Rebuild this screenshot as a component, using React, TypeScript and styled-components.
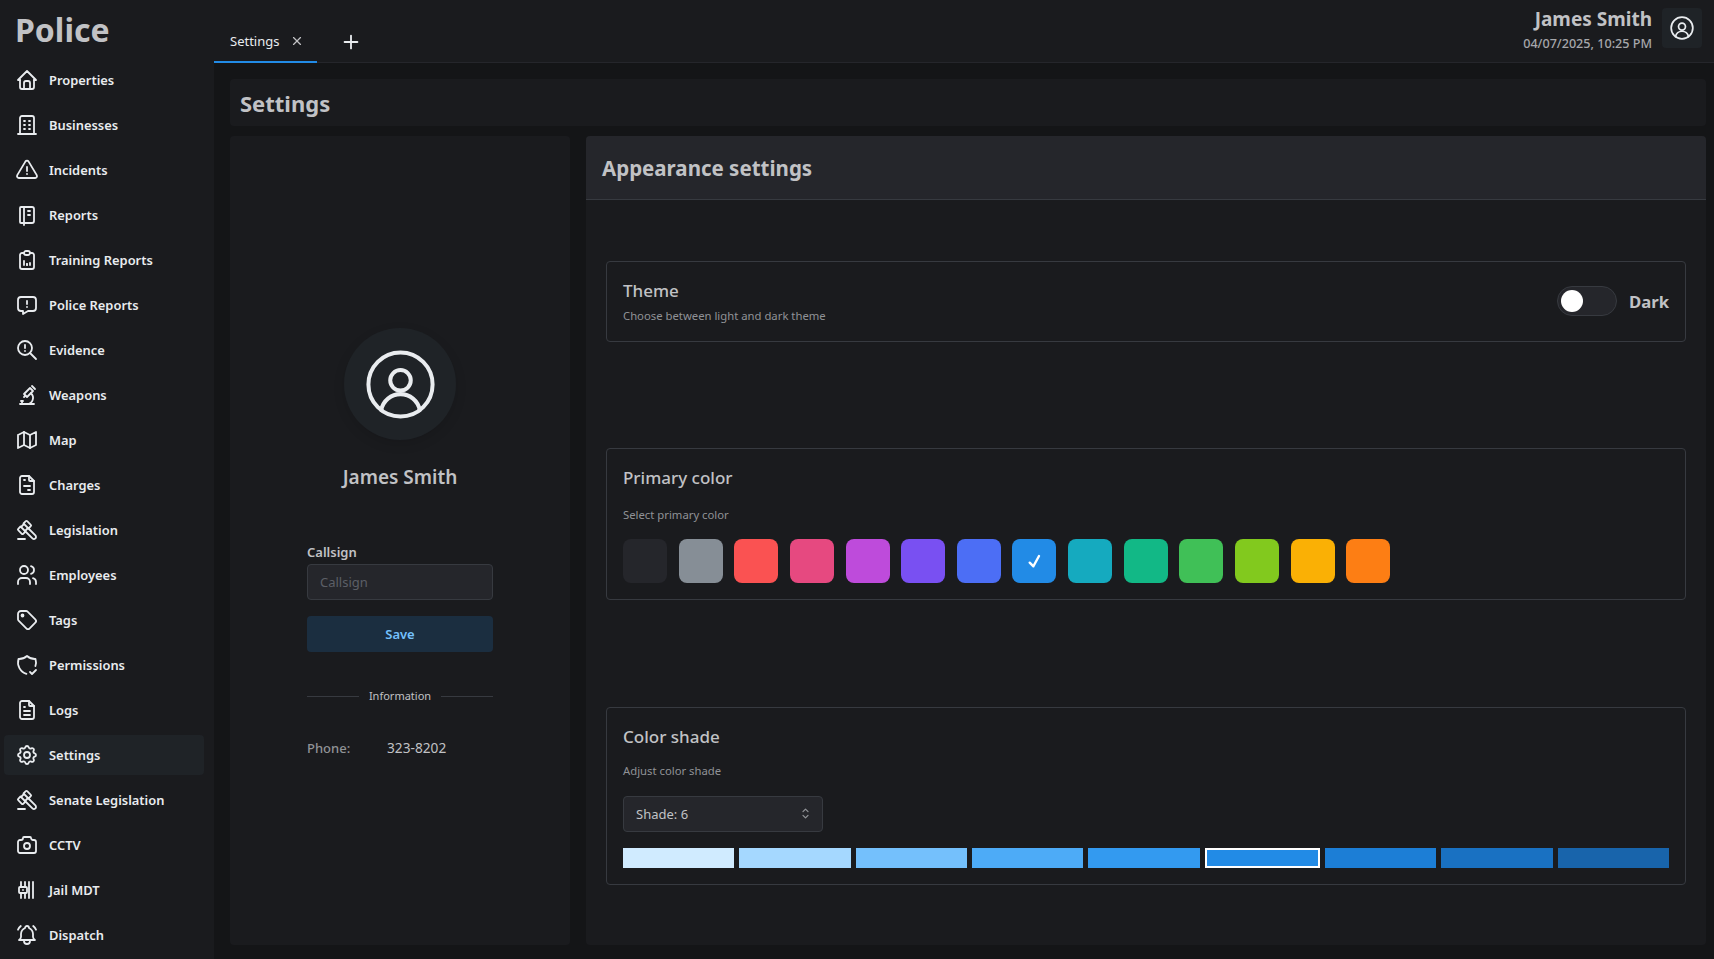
import React from "react";
import styled, { createGlobalStyle } from "styled-components";
import {
  TbHome, TbBuilding, TbAlertTriangle, TbNotebook, TbClipboardData, TbMessageReport,
  TbZoomExclamation, TbMicroscope, TbMap, TbFileInvoice, TbGavel, TbUsers, TbTag,
  TbShieldCheck, TbFileText, TbSettings, TbCamera, TbBellRinging,
  TbPlus, TbX, TbSelector,
} from "react-icons/tb";

const FONT = `"Noto Sans", "Open Sans", "Liberation Sans", sans-serif`;

const Global = createGlobalStyle`
  html, body { margin: 0; padding: 0; height: 100%; background: #141517; }
  * { box-sizing: border-box; }
  body { font-family: ${FONT}; color: #c1c2c5; overflow: hidden; }
`;

const Shell = styled.div`
  display: flex;
  width: 1714px;
  height: 959px;
  overflow: hidden;
`;

const Sidebar = styled.nav`
  width: 214px;
  flex: none;
  background: #1a1b1e;
  display: flex;
  flex-direction: column;
`;

const Logo = styled.h1`
  margin: 0;
  height: 60px;
  padding: 8px 0 0 15px;
  font-size: 32px;
  line-height: 44px;
  font-weight: 700;
  color: #c1c2c5;
`;

const NavList = styled.div`
  display: flex;
  flex-direction: column;
  gap: 5px;
  padding-left: 4px;
`;

const NavRow = styled.div<{ $active?: boolean }>`
  width: 200px;
  height: 40px;
  flex: none;
  display: flex;
  align-items: center;
  gap: 10px;
  padding-left: 11px;
  border-radius: 4px;
  background: ${(p) => (p.$active ? "#1f2327" : "transparent")};
  color: #e9ecef;
  font-size: 12.9px;
  font-weight: 600;
  svg { width: 24px; height: 24px; flex: none; stroke-width: 1.8; }
`;

const Main = styled.div`
  flex: 1;
  min-width: 0;
  display: flex;
  flex-direction: column;
`;

const TopBar = styled.header`
  height: 63px;
  flex: none;
  background: #1a1b1e;
  border-bottom: 1px solid #25262b;
  display: flex;
  align-items: flex-start;
  justify-content: space-between;
  padding-right: 12px;
`;

const TabStrip = styled.div`
  display: flex;
  align-items: center;
  height: 63px;
`;

const Tab = styled.div`
  width: 103px;
  height: 63px;
  border-bottom: 2px solid #228be6;
  display: flex;
  align-items: center;
  padding: 20px 0 0 16px;
  gap: 11px;
  font-size: 13px;
  color: #e9ecef;
  svg { width: 14px; height: 14px; color: #c1c2c5; }
`;

const AddTab = styled.div`
  margin: 20px 0 0 23px;
  display: flex;
  color: #e9ecef;
  svg { width: 22px; height: 22px; }
`;

const UserArea = styled.div`
  display: flex;
  align-items: flex-start;
  gap: 10px;
  padding-top: 8px;
`;

const UserText = styled.div`
  text-align: right;
`;

const UserName = styled.div`
  font-size: 19px;
  line-height: 22px;
  font-weight: 700;
  color: #c1c2c5;
`;

const UserDate = styled.div`
  margin-top: 4px;
  font-size: 12.6px;
  line-height: 20px;
  color: #a6a7ab;
  font-weight: 500;
`;

const UserBtn = styled.div`
  width: 40px;
  height: 40px;
  border-radius: 4px;
  background: #1f2327;
  color: #e9ecef;
  display: flex;
  align-items: center;
  justify-content: center;
  svg { width: 26px; height: 26px; }
`;

const Content = styled.main`
  flex: 1;
  min-height: 0;
  padding: 16px 8px 14px 16px;
  display: flex;
  flex-direction: column;
  gap: 10px;
`;

const TitleBar = styled.div`
  height: 47px;
  flex: none;
  background: #1a1b1e;
  border-radius: 4px;
  padding-left: 10px;
  display: flex;
  align-items: center;
  font-size: 22px;
  font-weight: 700;
  color: #c1c2c5;
`;

const Columns = styled.div`
  flex: 1;
  min-height: 0;
  display: flex;
  gap: 16px;
`;

const ProfileCard = styled.section`
  width: 340px;
  flex: none;
  background: #1a1b1e;
  border-radius: 4px;
  padding: 192px 77px 0;
  display: flex;
  flex-direction: column;
  align-items: center;
`;

const Avatar = styled.div`
  width: 112px;
  height: 112px;
  border-radius: 50%;
  background: #1f2327;
  box-shadow: 0 4px 12px rgba(0, 0, 0, 0.12);
  color: #e9ecef;
  display: flex;
  align-items: center;
  justify-content: center;
  svg { width: 77px; height: 77px; }
`;

const ProfileName = styled.div`
  margin-top: 23px;
  font-size: 19px;
  line-height: 28px;
  font-weight: 600;
  color: #c1c2c5;
`;

const FieldLabel = styled.label`
  align-self: stretch;
  margin-top: 51px;
  font-size: 13px;
  line-height: 20px;
  font-weight: 600;
  color: #c1c2c5;
`;

const TextInput = styled.input`
  display: block;
  width: 100%;
  height: 36px;
  margin-top: 2px;
  padding: 0 12px;
  background: #25262b;
  border: 1px solid #373a40;
  border-radius: 4px;
  font: 400 13px ${FONT};
  color: #c1c2c5;
  &::placeholder { color: #5c5f66; opacity: 1; }
`;

const SaveButton = styled.button`
  width: 100%;
  height: 36px;
  margin-top: 16px;
  background: #1b2e40;
  border: 0;
  border-radius: 4px;
  font: 600 13px ${FONT};
  color: #74c0fc;
`;

const DividerRow = styled.div`
  align-self: stretch;
  margin-top: 34px;
  display: flex;
  align-items: center;
  gap: 10px;
  font-size: 11px;
  line-height: 20px;
  color: #c1c2c5;
  &::before, &::after { content: ""; flex: 1; height: 1px; background: #373a40; }
`;

const InfoRow = styled.div`
  align-self: stretch;
  margin-top: 32px;
  display: flex;
  font-size: 13px;
  line-height: 20px;
`;

const InfoKey = styled.span`
  width: 80px;
  font-weight: 500;
  color: #909296;
`;

const InfoValue = styled.span`
  font-size: 13.7px;
  color: #c1c2c5;
`;

const SettingsCard = styled.section`
  flex: 1;
  min-width: 0;
  background: #1a1b1e;
  border-radius: 4px;
  overflow: hidden;
`;

const SettingsHeader = styled.div`
  height: 64px;
  background: #25262b;
  border-bottom: 1px solid #373a40;
  padding-left: 16px;
  display: flex;
  align-items: center;
  font-size: 20.5px;
  font-weight: 700;
  color: #c1c2c5;
`;

const SettingsBody = styled.div`
  padding: 61px 20px 0;
  display: flex;
  flex-direction: column;
  gap: 106.5px;
`;

const Group = styled.div`
  border: 1px solid #373a40;
  border-radius: 4px;
  padding: 16px;
`;

const ThemeGroup = styled(Group)`
  height: 80.5px;
  padding-top: 0;
  padding-bottom: 0;
  display: flex;
  align-items: center;
  justify-content: space-between;
`;

const GroupTitle = styled.div`
  font-size: 17px;
  line-height: 26px;
  font-weight: 500;
  color: #c1c2c5;
`;

const GroupHint = styled.div<{ $gap: number }>`
  margin-top: ${(p) => p.$gap}px;
  font-size: 11.3px;
  line-height: 18px;
  color: #909296;
`;

const ThemeControl = styled.div`
  display: flex;
  align-items: center;
  gap: 12px;
  font-size: 16.7px;
  font-weight: 700;
  color: #c1c2c5;
`;

const Track = styled.div`
  width: 60px;
  height: 30px;
  border-radius: 15px;
  background: #25262b;
  border: 1px solid #373a40;
  padding: 3px;
  display: flex;
  align-items: center;
`;

const Thumb = styled.div`
  width: 22px;
  height: 22px;
  border-radius: 50%;
  background: #fff;
`;

const SwatchRow = styled.div`
  margin-top: 15px;
  display: flex;
  gap: 11.65px;
`;

const Swatch = styled.div<{ $color: string }>`
  width: 44px;
  height: 44px;
  border-radius: 8px;
  background: ${(p) => p.$color};
  display: flex;
  align-items: center;
  justify-content: center;
  color: #fff;
`;

const ShadeSelect = styled.div`
  margin-top: 16px;
  width: 200px;
  height: 36px;
  background: #25262b;
  border: 1px solid #373a40;
  border-radius: 4px;
  padding: 0 9px 0 12px;
  display: flex;
  align-items: center;
  justify-content: space-between;
  font-size: 13px;
  color: #c1c2c5;
  svg { width: 15px; height: 15px; color: #909296; }
`;

const ShadeRow = styled.div`
  margin-top: 16px;
  display: flex;
  gap: 5px;
`;

const Shade = styled.div<{ $color: string; $selected?: boolean }>`
  flex: 1;
  height: 20px;
  background: ${(p) => p.$color};
  border: ${(p) => (p.$selected ? "2px solid #fff" : "0")};
`;

const PrisonIcon = () => (
  <svg viewBox="0 0 24 24" fill="none" stroke="currentColor" strokeLinecap="round" strokeLinejoin="round" strokeWidth="2">
    <path d="M18 4v16M14 4v16M6 4v5M6 15v5M10 4v5M11 9h-6a1 1 0 0 0 -1 1v4a1 1 0 0 0 1 1h6a1 1 0 0 0 1 -1v-4a1 1 0 0 0 -1 -1zM10 15v5M8 12h.01" />
  </svg>
);

const UserRing = ({ sw }: { sw: number }) => (
  <svg viewBox="0 0 24 24" fill="none" stroke="currentColor" strokeWidth={sw} strokeLinecap="round">
    <circle cx="12" cy="12" r="10" />
    <circle cx="12" cy="10.7" r="3.2" />
    <path d="M6 20A6.1 6.1 0 0 1 18 20" />
  </svg>
);

const CheckMark = () => (
  <svg width="13" height="14" viewBox="0 0 13 14" fill="none" stroke="currentColor" strokeWidth="2.4" strokeLinecap="round" strokeLinejoin="round">
    <path d="M1.7 8.7L5.4 12.3L11 2" />
  </svg>
);

const NAV: { label: string; icon: React.ReactNode }[] = [
  { label: "Properties", icon: <TbHome /> },
  { label: "Businesses", icon: <TbBuilding /> },
  { label: "Incidents", icon: <TbAlertTriangle /> },
  { label: "Reports", icon: <TbNotebook /> },
  { label: "Training Reports", icon: <TbClipboardData /> },
  { label: "Police Reports", icon: <TbMessageReport /> },
  { label: "Evidence", icon: <TbZoomExclamation /> },
  { label: "Weapons", icon: <TbMicroscope /> },
  { label: "Map", icon: <TbMap /> },
  { label: "Charges", icon: <TbFileInvoice /> },
  { label: "Legislation", icon: <TbGavel /> },
  { label: "Employees", icon: <TbUsers /> },
  { label: "Tags", icon: <TbTag /> },
  { label: "Permissions", icon: <TbShieldCheck /> },
  { label: "Logs", icon: <TbFileText /> },
  { label: "Settings", icon: <TbSettings /> },
  { label: "Senate Legislation", icon: <TbGavel /> },
  { label: "CCTV", icon: <TbCamera /> },
  { label: "Jail MDT", icon: <PrisonIcon /> },
  { label: "Dispatch", icon: <TbBellRinging /> },
];

const SWATCHES = ["#25262b", "#868e96", "#fa5252", "#e64980", "#be4bdb", "#7950f2", "#4c6ef5", "#228be6", "#15aabf", "#12b886", "#40c057", "#82c91e", "#fab005", "#fd7e14"];
const SHADES = ["#d0ebff", "#a5d8ff", "#74c0fc", "#4dabf7", "#339af0", "#228be6", "#1c7ed6", "#1971c2", "#1864ab"];

export default function App() {
  return (
    <Shell>
      <Global />
      <Sidebar>
        <Logo>Police</Logo>
        <NavList>
          {NAV.map((n) => (
            <NavRow key={n.label} $active={n.label === "Settings"}>
              {n.icon}
              <span>{n.label}</span>
            </NavRow>
          ))}
        </NavList>
      </Sidebar>
      <Main>
        <TopBar>
          <TabStrip>
            <Tab>
              <span>Settings</span>
              <TbX />
            </Tab>
            <AddTab><TbPlus /></AddTab>
          </TabStrip>
          <UserArea>
            <UserText>
              <UserName>James Smith</UserName>
              <UserDate>04/07/2025, 10:25 PM</UserDate>
            </UserText>
            <UserBtn><UserRing sw={1.6} /></UserBtn>
          </UserArea>
        </TopBar>
        <Content>
          <TitleBar>Settings</TitleBar>
          <Columns>
            <ProfileCard>
              <Avatar><UserRing sw={1.25} /></Avatar>
              <ProfileName>James Smith</ProfileName>
              <FieldLabel htmlFor="callsign">Callsign
                <TextInput id="callsign" placeholder="Callsign" />
              </FieldLabel>
              <SaveButton>Save</SaveButton>
              <DividerRow>Information</DividerRow>
              <InfoRow>
                <InfoKey>Phone:</InfoKey>
                <InfoValue>323-8202</InfoValue>
              </InfoRow>
            </ProfileCard>
            <SettingsCard>
              <SettingsHeader>Appearance settings</SettingsHeader>
              <SettingsBody>
                <ThemeGroup>
                  <div>
                    <GroupTitle>Theme</GroupTitle>
                    <GroupHint $gap={3}>Choose between light and dark theme</GroupHint>
                  </div>
                  <ThemeControl>
                    <Track><Thumb /></Track>
                    Dark
                  </ThemeControl>
                </ThemeGroup>
                <Group>
                  <GroupTitle>Primary color</GroupTitle>
                  <GroupHint $gap={15}>Select primary color</GroupHint>
                  <SwatchRow>
                    {SWATCHES.map((c) => (
                      <Swatch key={c} $color={c}>{c === "#228be6" && <CheckMark />}</Swatch>
                    ))}
                  </SwatchRow>
                </Group>
                <Group>
                  <GroupTitle>Color shade</GroupTitle>
                  <GroupHint $gap={12}>Adjust color shade</GroupHint>
                  <ShadeSelect>
                    <span>Shade: 6</span>
                    <TbSelector />
                  </ShadeSelect>
                  <ShadeRow>
                    {SHADES.map((c) => (
                      <Shade key={c} $color={c} $selected={c === "#228be6"} />
                    ))}
                  </ShadeRow>
                </Group>
              </SettingsBody>
            </SettingsCard>
          </Columns>
        </Content>
      </Main>
    </Shell>
  );
}
